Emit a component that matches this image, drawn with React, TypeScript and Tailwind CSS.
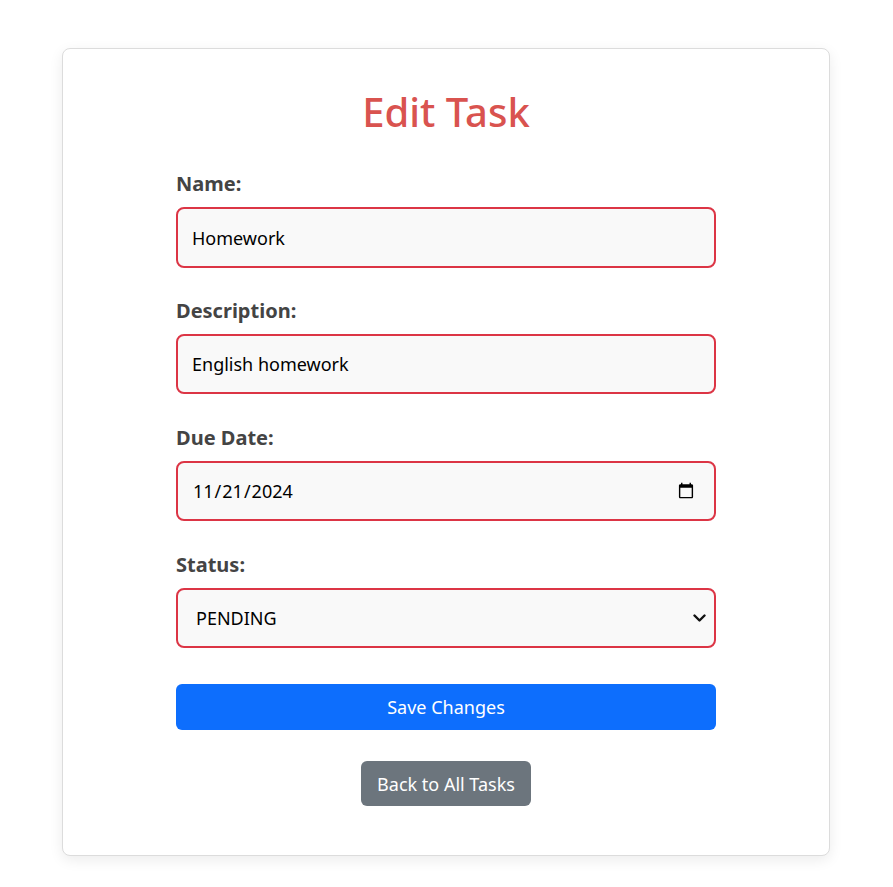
import React from "react";

export default function App() {
  const font = { fontFamily: '"Noto Sans", "Open Sans", sans-serif' };
  const labelCls = "mb-[10px] text-[20px] leading-[27px] font-bold text-[#444]";
  const fieldCls =
    "w-full rounded-lg border-2 border-[#dc3545] bg-[#f9f9f9] text-[18px] text-black outline-none";
  return (
    <div className="min-h-[887px] bg-white pt-12" style={font}>
      <div className="ml-[62px] w-[768px] rounded-lg border border-[#dcdcdc] bg-white px-[113px] pt-[39px] pb-[49px] shadow-[0_4px_14px_rgba(0,0,0,0.08)]">
        <h1 className="text-center text-[40px] leading-[48px] font-medium text-[#d9534f]">Edit Task</h1>
        <form className="mt-[34px] flex flex-col" onSubmit={(e) => e.preventDefault()}>
          <div className="flex flex-col">
            <label className={labelCls}>Name:</label>
            <input type="text" defaultValue="Homework" className={`${fieldCls} h-[61px] px-[14px]`} />
          </div>
          <div className="mt-[29px] flex flex-col">
            <label className={labelCls}>Description:</label>
            <input type="text" defaultValue="English homework" className={`${fieldCls} h-[60px] px-[14px]`} />
          </div>
          <div className="mt-[30px] flex flex-col">
            <label className={labelCls}>Due Date:</label>
            <input type="date" defaultValue="2024-11-21" className={`${fieldCls} h-[60px] pl-[14px] pr-[17px]`} />
          </div>
          <div className="mt-[30px] flex flex-col">
            <label className={labelCls}>Status:</label>
            <div className="relative">
              <select defaultValue="PENDING" className={`${fieldCls} h-[60px] appearance-none pl-[18px] pr-[32px]`}>
                <option value="PENDING">PENDING</option>
                <option value="IN_PROGRESS">IN_PROGRESS</option>
                <option value="COMPLETED">COMPLETED</option>
              </select>
              <svg
                className="pointer-events-none absolute right-[10px] top-1/2 -translate-y-1/2"
                width="13"
                height="9"
                viewBox="0 0 13 9"
                fill="none"
              >
                <path d="M1.5 2l5 5 5-5" stroke="#111" strokeWidth="2.4" strokeLinecap="round" strokeLinejoin="round" />
              </svg>
            </div>
          </div>
          <button
            type="submit"
            className="mt-[36px] h-[46px] w-full rounded-md bg-[#0d6efd] pt-px text-[18px] text-white"
          >
            Save Changes
          </button>
        </form>
        <div className="mt-[31px] flex justify-center">
          <button className="h-[45px] rounded-md bg-[#6c757d] px-4 pt-px text-[18px] text-white">Back to All Tasks</button>
        </div>
      </div>
    </div>
  );
}
